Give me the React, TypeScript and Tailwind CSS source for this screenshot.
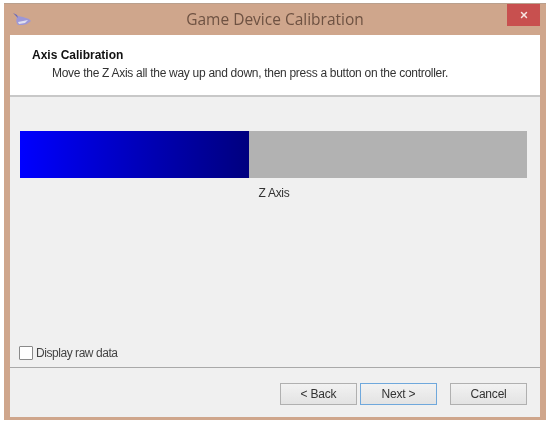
import React from 'react';
import {X} from 'lucide-react';

const WizardButton = ({label, focused}: {label: string; focused?: boolean}) => (
    <button
        className={`block w-[77px] h-[22px] border text-[12px] leading-none tracking-[-0.2px] text-[#333] bg-gradient-to-b from-[#f2f2f2] to-[#e3e3e3] ${focused ? 'border-[#6fa8dc]' : 'border-[#b0b0b0]'}`}
    >
        {label}
    </button>
);

const App = () => {
    return (
        <div className="w-[550px] h-[429px] bg-white pt-[3px] pl-[4px] font-['Liberation_Sans',sans-serif] blur-[0.35px]">
            <div className="w-[542px] h-[417px] bg-[#cfa68c] border-t border-[#b9a08e] flex flex-col pl-[6px] pr-[6px] pb-[3px]">
                {/* Title bar */}
                <div className="h-[31px] shrink-0 flex items-start relative">
                    <svg className="absolute left-[3px] top-[8px]" width="18" height="14" viewBox="0 0 18 14">
                        <path d="M1 1 L5 4 L10 5 L16 7 L18 9 Q15 12 10 13 L5 13 Q2 9 4 6 Z" fill="#9d97d6"/>
                        <path d="M5 10 L15 8 L12 11 L6 12 Z" fill="#dfe0f0"/>
                        <path d="M0 1 L4 3 L5 6 Z" fill="#6f6aa8"/>
                    </svg>
                    <div className="flex-1 text-center text-[15.5px] leading-[20px] pt-[5px] text-[#6e5242] font-['Open_Sans',sans-serif]">
                        Game Device Calibration
                    </div>
                    <div className="absolute right-0 top-0 w-[33px] h-[22px] bg-[#c8504f] flex items-center justify-center">
                        <X className="w-[10px] h-[10px] text-[#f7e6e2]" strokeWidth={3.5}/>
                    </div>
                </div>

                {/* Client area */}
                <div className="flex-1 flex flex-col bg-[#f0f0f0]">
                    <div className="h-[62px] shrink-0 bg-white border-b-2 border-[#c8c8c8] pl-[22px] pt-[13px]">
                        <div className="text-[12px] leading-[15px] font-bold text-[#111]">Axis Calibration</div>
                        <div className="text-[12px] leading-[15px] pt-[3px] pl-[20px] text-[#333] tracking-[-0.29px]">
                            Move the Z Axis all the way up and down, then press a button on the controller.
                        </div>
                    </div>

                    <div className="flex-1 flex flex-col px-[10px] pt-[34px]">
                        <div className="h-[47px] w-[507px] flex bg-[#b2b2b2]">
                            <div className="w-[229px] bg-gradient-to-r from-[#0000ff] to-[#00007f]"></div>
                        </div>
                        <div className="text-center text-[12px] leading-[15px] pt-[8px] pr-[2px] text-[#333] tracking-[-0.3px]">Z Axis</div>
                        <div className="mt-auto mb-[6px] -ml-[1px] flex items-center gap-[3px]">
                            <div className="w-[14px] h-[14px] bg-white border border-[#8a8a8a] rounded-[1px]"></div>
                            <span className="text-[12px] leading-[15px] pt-[1px] text-[#444] tracking-[-0.45px]">Display raw data</span>
                        </div>
                    </div>

                    <div className="h-[50px] shrink-0 border-t border-[#a9a9a9] flex justify-end items-start pt-[15px] pr-[13px]">
                        <WizardButton label="< Back"/>
                        <div className="ml-[3px]"><WizardButton label="Next >" focused/></div>
                        <div className="ml-[13px]"><WizardButton label="Cancel"/></div>
                    </div>
                </div>
            </div>
        </div>
    );
};

export default App;
